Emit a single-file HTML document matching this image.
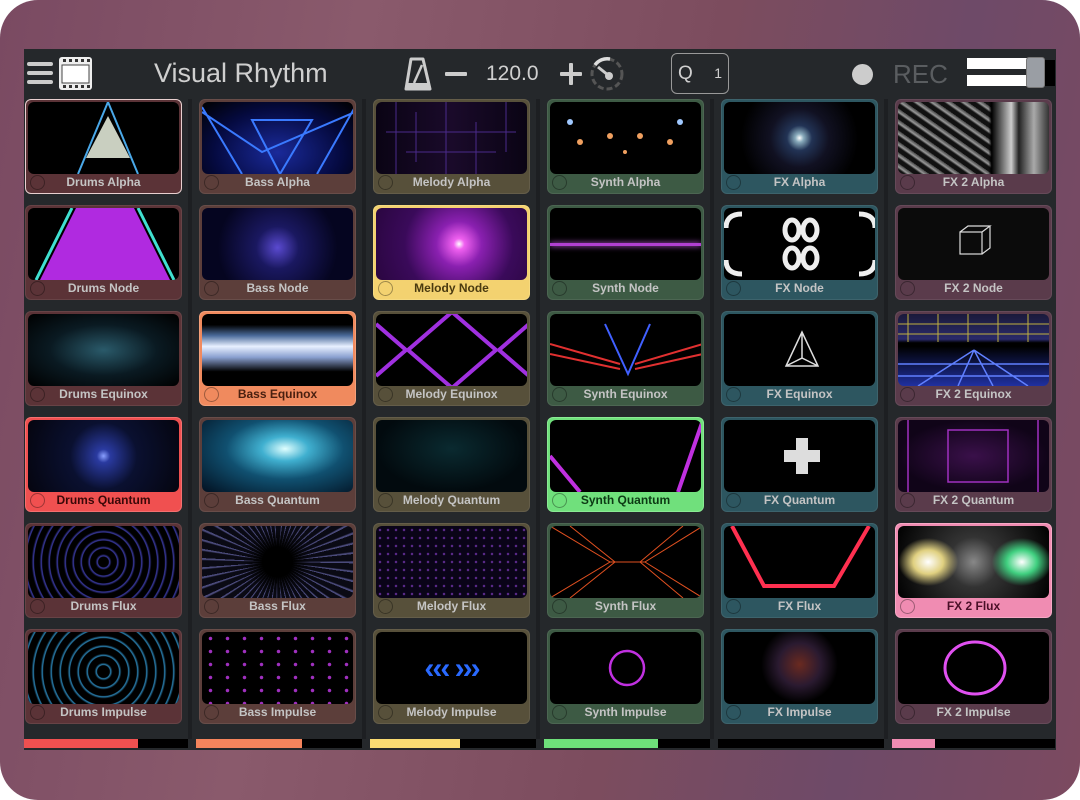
<!DOCTYPE html>
<html><head><meta charset="utf-8"><style>
*{margin:0;padding:0;box-sizing:border-box}
html,body{width:1080px;height:800px;overflow:hidden;background:#fff}
#dev{position:absolute;left:0;top:0;width:1080px;height:800px;border-radius:38px;background:linear-gradient(100deg,#7a4a62 0%,#8a5a6c 30%,#7c4c5e 60%,#6e4a68 80%,#7c4a60 100%)}
#app{position:absolute;left:24px;top:49px;width:1032px;height:701px;background:#25282b}
.sep{position:absolute;top:50px;width:4px;height:640px;background:#1d1f22}
.hdr{position:absolute;font-family:"Liberation Sans",sans-serif;color:#d0d0d0}
.card{position:absolute;width:157px;height:95px;border-radius:6px;border:1px solid rgba(255,255,255,.08);overflow:hidden}
.th{position:absolute;left:2px;top:2px;right:2px;height:72px;border-radius:6px;background:#000;overflow:hidden}
.lb{position:absolute;left:0;right:0;bottom:0;height:21px;font:bold 12px "Liberation Sans",sans-serif;color:#c4c4c4;text-align:center;line-height:21px}
.lb:before{content:"";position:absolute;left:4px;top:3px;width:13px;height:13px;border-radius:50%;border:1px solid rgba(0,0,0,.35)}
.th svg{position:absolute;left:0;top:0}
.dr{background:#5b3337}.ba{background:#5c3e3a}.me{background:#57503a}.sy{background:#3d5a44}.fx{background:#2d5660}.f2{background:#5a3b4b}
.bar{position:absolute;top:739px;height:9px}
</style></head><body>
<div id="dev"></div>
<div id="app"></div>
<div class="sep" style="left:188px;top:99px"></div><div class="sep" style="left:362px;top:99px"></div><div class="sep" style="left:536px;top:99px"></div><div class="sep" style="left:710px;top:99px"></div><div class="sep" style="left:884px;top:99px"></div>
<svg class="hdr" style="left:26px;top:56px" width="68" height="36"><rect x="1" y="6" width="26" height="4" rx="2" fill="#ccc"/><rect x="1" y="15" width="26" height="4" rx="2" fill="#ccc"/><rect x="1" y="24" width="26" height="4" rx="2" fill="#ccc"/><rect x="33" y="1" width="33" height="33" rx="3" fill="#eee"/><rect x="36" y="9" width="27" height="18" fill="#fff" stroke="#444" stroke-width="1"/><g fill="#333"><rect x="37" y="3" width="3" height="3"/><rect x="43" y="3" width="3" height="3"/><rect x="49" y="3" width="3" height="3"/><rect x="55" y="3" width="3" height="3"/><rect x="61" y="3" width="3" height="3"/><rect x="37" y="29" width="3" height="3"/><rect x="43" y="29" width="3" height="3"/><rect x="49" y="29" width="3" height="3"/><rect x="55" y="29" width="3" height="3"/><rect x="61" y="29" width="3" height="3"/></g></svg>
<div class="hdr" style="left:154px;top:58px;font-size:27px;color:#cfcfcf">Visual Rhythm</div>
<svg class="hdr" style="left:402px;top:55px" width="230" height="38"><path d="M9 4 H21 L28 34 H4 Z" fill="none" stroke="#ccc" stroke-width="3" stroke-linejoin="round"/><path d="M12 28 L20 10" stroke="#ccc" stroke-width="2.5"/><rect x="5" y="28" width="22" height="5" fill="#ccc"/><rect x="43" y="17" width="22" height="4" rx="1" fill="#ccc"/><rect x="158" y="17" width="22" height="4" rx="1" fill="#ccc"/><rect x="167" y="8" width="4" height="22" rx="1" fill="#ccc"/><circle cx="205" cy="19" r="15" fill="none" stroke="#555" stroke-width="3" stroke-dasharray="6 3"/><path d="M193 10 A15 15 0 0 1 208 4" fill="none" stroke="#ddd" stroke-width="3.5"/><path d="M196 12 L206 20" stroke="#ccc" stroke-width="3"/><circle cx="207" cy="21" r="4" fill="#ccc"/></svg>
<div class="hdr" style="left:486px;top:62px;font-size:21px">120.0</div>
<div class="hdr" style="left:671px;top:53px;width:58px;height:41px;border:1px solid #999;border-radius:6px"><span style="position:absolute;left:6px;top:9px;font-size:19px">Q</span><span style="position:absolute;right:6px;top:11px;font-size:14px">1</span></div>
<div class="hdr" style="left:852px;top:64px;width:21px;height:21px;border-radius:50%;background:#ccc"></div>
<div class="hdr" style="left:893px;top:59px;font-size:26px;color:#5a5d60">REC</div>
<div class="hdr" style="left:967px;top:58px;width:62px;height:11px;background:#fff"></div>
<div class="hdr" style="left:967px;top:75px;width:62px;height:11px;background:#fff"></div>
<div class="hdr" style="left:1026px;top:57px;width:19px;height:31px;background:#9a9ea4;border-radius:3px;border:1px solid #777"></div>
<div class="hdr" style="left:1045px;top:60px;width:10px;height:26px;background:#000"></div>

<div class="card dr" style="left:25px;top:99px;border:1px solid #e8cfcf"><div class="th"><svg width="153" height="72"><path d="M50 72 L80 0 M110 72 L80 0" stroke="#4aa8e8" stroke-width="2"/><path d="M80 14 L58 56 H102Z" fill="#c9cfc0"/></svg></div><div class="lb">Drums Alpha</div></div>
<div class="card ba" style="left:199px;top:99px"><div class="th" style="background:radial-gradient(ellipse at 50% 70%,#1a2a9a,#050a40 60%,#000)"><svg width="153" height="72"><path d="M0 5 L40 72 M153 5 L115 72 M0 10 L60 50 L153 10 M50 18 H110 L78 72 Z" stroke="#3a7aff" stroke-width="2" fill="none"/></svg></div><div class="lb">Bass Alpha</div></div>
<div class="card me" style="left:373px;top:99px"><div class="th" style="background:linear-gradient(90deg,#0a0414,#1a0a2a,#0a0414)"><svg width="153" height="72"><path d="M20 0V72M40 10V60M70 0V72M100 20V72M130 0V50M10 30H140M30 50H120" stroke="#4a2a8a" stroke-width="1"/></svg></div><div class="lb">Melody Alpha</div></div>
<div class="card sy" style="left:547px;top:99px"><div class="th"><svg width="153" height="72"><g fill="#f0a060"><circle cx="30" cy="40" r="3"/><circle cx="60" cy="34" r="3"/><circle cx="90" cy="34" r="3"/><circle cx="120" cy="40" r="3"/><circle cx="75" cy="50" r="2"/></g><g fill="#a0c8ff"><circle cx="130" cy="20" r="3"/><circle cx="20" cy="20" r="3"/></g></svg></div><div class="lb">Synth Alpha</div></div>
<div class="card fx" style="left:721px;top:99px"><div class="th" style="background:radial-gradient(circle at 50% 50%,#fff 0,#8ab 5%,#235 15%,#112 35%,#000 70%)"></div><div class="lb">FX Alpha</div></div>
<div class="card f2" style="left:895px;top:99px"><div class="th" style="background:linear-gradient(90deg,transparent 60%,#000 62%,#ccc 75%,#222 80%,#aaa 90%,#333),repeating-linear-gradient(35deg,#111 0,#111 4px,#999 6px,#444 9px)"></div><div class="lb">FX 2 Alpha</div></div>

<div class="card dr" style="left:25px;top:205px"><div class="th"><svg width="153" height="72"><path d="M12 72 L48 0 H106 L142 72Z" fill="#b02ae0"/><path d="M8 72 L44 0 M146 72 L110 0" stroke="#40e0d0" stroke-width="3"/></svg></div><div class="lb">Drums Node</div></div>
<div class="card ba" style="left:199px;top:205px"><div class="th" style="background:radial-gradient(circle at 50% 55%,#5a4ad0 0,#1a1860 25%,#050520 70%)"></div><div class="lb">Bass Node</div></div>
<div class="card me" style="left:373px;top:205px;background:#f3d270;border-color:#f6da80"><div class="th" style="background:radial-gradient(circle at 55% 50%,#fff 0,#f060f0 6%,#8a20b0 25%,#3a0a5a 60%,#2a0640)"></div><div class="lb" style="color:#4a3a10">Melody Node</div></div>
<div class="card sy" style="left:547px;top:205px"><div class="th"><div style="position:absolute;left:0;right:0;top:35px;height:3px;background:#b040d0;box-shadow:0 0 6px #d060f0"></div></div><div class="lb">Synth Node</div></div>
<div class="card fx" style="left:721px;top:205px"><div class="th"><svg width="153" height="72"><g fill="none" stroke="#eee" stroke-width="5"><path d="M2 20 Q2 6 18 6 M151 20 Q151 6 135 6 M2 52 Q2 66 18 66 M151 52 Q151 66 135 66"/><ellipse cx="68" cy="22" rx="7" ry="10"/><ellipse cx="86" cy="22" rx="7" ry="10"/><ellipse cx="68" cy="50" rx="7" ry="10"/><ellipse cx="86" cy="50" rx="7" ry="10"/></g></svg></div><div class="lb">FX Node</div></div>
<div class="card f2" style="left:895px;top:205px"><div class="th" style="background:#0b0b0b"><svg width="153" height="72"><g fill="none" stroke="#ddd" stroke-width="1.2"><rect x="62" y="24" width="22" height="22"/><path d="M62 24 L70 18 H92 L84 24 M92 18 V40 L84 46"/></g></svg></div><div class="lb">FX 2 Node</div></div>

<div class="card dr" style="left:25px;top:311px"><div class="th" style="background:radial-gradient(ellipse at 50% 50%,#2a5a6a,#0a1a22 50%,#000)"></div><div class="lb">Drums Equinox</div></div>
<div class="card ba" style="left:199px;top:311px;background:#f08a5e;border-color:#f4a07a"><div class="th" style="background:linear-gradient(180deg,#000 15%,#4a6a9a 30%,#e8f0ff 45%,#8aa0d0 60%,#000 80%)"></div><div class="lb" style="color:#4a2010">Bass Equinox</div></div>
<div class="card me" style="left:373px;top:311px"><div class="th"><svg width="153" height="72"><path d="M76 -2 L120 36 L76 74 L32 36Z M0 10 L30 36 L0 62 M153 10 L123 36 L153 62" fill="none" stroke="#a030e0" stroke-width="4"/></svg></div><div class="lb">Melody Equinox</div></div>
<div class="card sy" style="left:547px;top:311px"><div class="th"><svg width="153" height="72"><path d="M0 30 L70 50 M153 30 L85 50 M0 40 L70 55 M153 40 L85 55" stroke="#e03030" stroke-width="2"/><path d="M55 10 L78 60 L100 10" stroke="#4060ff" stroke-width="2" fill="none"/></svg></div><div class="lb">Synth Equinox</div></div>
<div class="card fx" style="left:721px;top:311px"><div class="th"><svg width="153" height="72"><path d="M78 18 L62 52 H94Z M78 18 L78 44 L62 52 M78 44 L94 52" fill="none" stroke="#ddd" stroke-width="1.5"/></svg></div><div class="lb">FX Equinox</div></div>
<div class="card f2" style="left:895px;top:311px"><div class="th" style="background:linear-gradient(180deg,#1a1a3a 0,#2a2a6a 35%,#000 40%,#000 45%,#2030a0 100%)"><svg width="153" height="72"><path d="M0 10 H153 M0 20 H153 M10 0 V28 M40 0 V28 M70 0 V28 M100 0 V28 M130 0 V28" stroke="#c0b040" stroke-width="1"/><path d="M0 50 H153 M0 62 H153 M76 36 L20 72 M76 36 L130 72 M76 36 L60 72 M76 36 L95 72" stroke="#6080ff" stroke-width="1.5"/></svg></div><div class="lb">FX 2 Equinox</div></div>

<div class="card dr" style="left:25px;top:417px;background:#f05050;border-color:#f47070"><div class="th" style="background:radial-gradient(circle at 50% 50%,#8aa0ff 0,#2a3aa0 8%,#0a1030 40%,#05050f)"></div><div class="lb" style="color:#3a0808">Drums Quantum</div></div>
<div class="card ba" style="left:199px;top:417px"><div class="th" style="background:radial-gradient(ellipse at 55% 40%,#e0ffff 0,#40b0d0 20%,#105070 50%,#021020)"></div><div class="lb">Bass Quantum</div></div>
<div class="card me" style="left:373px;top:417px"><div class="th" style="background:radial-gradient(ellipse at 50% 40%,#0a2a30,#020a0e 70%)"></div><div class="lb">Melody Quantum</div></div>
<div class="card sy" style="left:547px;top:417px;background:#70e07c;border-color:#8aeb94"><div class="th"><svg width="153" height="72"><path d="M0 36 L30 72 M153 0 L128 72" stroke="#c030e0" stroke-width="4"/></svg></div><div class="lb" style="color:#0c3a14">Synth Quantum</div></div>
<div class="card fx" style="left:721px;top:417px"><div class="th"><svg width="153" height="72"><path d="M72 18 H84 V30 H96 V42 H84 V54 H72 V42 H60 V30 H72Z" fill="#ddd"/></svg></div><div class="lb">FX Quantum</div></div>
<div class="card f2" style="left:895px;top:417px"><div class="th" style="background:radial-gradient(ellipse at 50% 50%,#3a104a,#100418 70%)"><svg width="153" height="72"><path d="M10 0V72M140 0V72M50 10H110V62H50Z" fill="none" stroke="#a030c0" stroke-width="1.5"/></svg></div><div class="lb">FX 2 Quantum</div></div>

<div class="card dr" style="left:25px;top:523px"><div class="th" style="background:repeating-radial-gradient(circle at 50% 50%,#000 0,#000 5px,#3a3aa0 6px,#000 8px)"></div><div class="lb">Drums Flux</div></div>
<div class="card ba" style="left:199px;top:523px"><div class="th" style="background:radial-gradient(circle,#000 0,#000 18%,transparent 40%),repeating-conic-gradient(from 0deg at 50% 50%,#0a0a14 0 5deg,#4a4a7a 6deg 7deg)"></div><div class="lb">Bass Flux</div></div>
<div class="card me" style="left:373px;top:523px"><div class="th" style="background:radial-gradient(circle,#5a2a8a 1px,transparent 1.5px) 0 0/8px 8px,#0a0418"></div><div class="lb">Melody Flux</div></div>
<div class="card sy" style="left:547px;top:523px"><div class="th"><svg width="153" height="72"><path d="M0 0 L60 36 L0 72 M153 0 L95 36 L153 72 M20 0 L65 36 L20 72 M133 0 L90 36 L133 72 M60 36 H95" stroke="#e05020" stroke-width="1" fill="none"/></svg></div><div class="lb">Synth Flux</div></div>
<div class="card fx" style="left:721px;top:523px"><div class="th"><svg width="153" height="72"><path d="M8 0 L40 60 H110 L145 0" stroke="#ff3050" stroke-width="4" fill="none"/></svg></div><div class="lb">FX Flux</div></div>
<div class="card f2" style="left:895px;top:523px;background:#f08cb2;border-color:#f8a8c6"><div class="th" style="background:radial-gradient(ellipse 30px 24px at 20% 50%,#fff,#e0d080 50%,transparent),radial-gradient(ellipse 30px 24px at 82% 50%,#fff,#40d080 50%,transparent),radial-gradient(circle at 50% 50%,#888 0,#333 30%,#000)"></div><div class="lb" style="color:#4a1028">FX 2 Flux</div></div>

<div class="card dr" style="left:25px;top:629px"><div class="th" style="background:repeating-radial-gradient(circle at 50% 55%,#000 0,#000 6px,#2a80b0 7px,#000 9px)"></div><div class="lb">Drums Impulse</div></div>
<div class="card ba" style="left:199px;top:629px"><div class="th" style="background:radial-gradient(circle,#a030c0 1.5px,transparent 2px) 0 0/17px 13px,#000"></div><div class="lb">Bass Impulse</div></div>
<div class="card me" style="left:373px;top:629px"><div class="th"><div style="position:absolute;left:0;right:0;top:20px;font:bold 30px 'Liberation Sans',sans-serif;color:#2a6aff;text-align:center;letter-spacing:-2px">‹‹‹ ›››</div></div><div class="lb">Melody Impulse</div></div>
<div class="card sy" style="left:547px;top:629px"><div class="th"><svg width="153" height="72"><circle cx="77" cy="36" r="17" fill="none" stroke="#c030e0" stroke-width="2.5"/></svg></div><div class="lb">Synth Impulse</div></div>
<div class="card fx" style="left:721px;top:629px"><div class="th" style="background:radial-gradient(circle at 50% 45%,#6a2a20 0,#2a1a30 25%,#000 45%)"></div><div class="lb">FX Impulse</div></div>
<div class="card f2" style="left:895px;top:629px"><div class="th"><svg width="153" height="72"><ellipse cx="77" cy="36" rx="30" ry="26" fill="none" stroke="#e050f0" stroke-width="3"/></svg></div><div class="lb">FX 2 Impulse</div></div>

<div class="bar" style="left:24px;width:164px;background:#000"></div><div class="bar" style="left:24px;width:114px;background:#f05050"></div>
<div class="bar" style="left:196px;width:166px;background:#000"></div><div class="bar" style="left:196px;width:106px;background:#f5845c"></div>
<div class="bar" style="left:370px;width:166px;background:#000"></div><div class="bar" style="left:370px;width:90px;background:#fadb72"></div>
<div class="bar" style="left:544px;width:166px;background:#000"></div><div class="bar" style="left:544px;width:114px;background:#6ee07a"></div>
<div class="bar" style="left:718px;width:166px;background:#000"></div>
<div class="bar" style="left:892px;width:163px;background:#000"></div><div class="bar" style="left:892px;width:43px;background:#f08cb2"></div>
</body></html>
